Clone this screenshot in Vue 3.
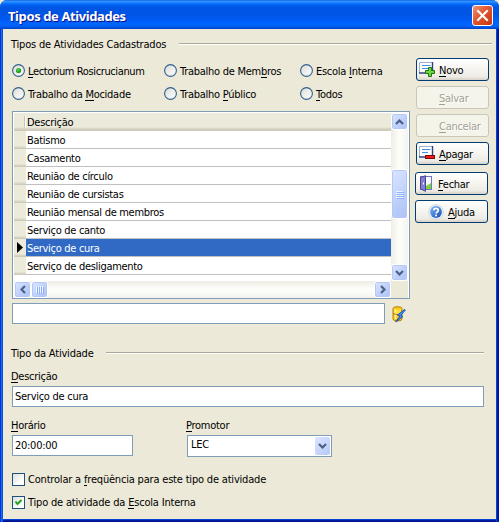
<script setup>
import { ref } from 'vue'

const sources = [
  ['', 'L', 'ectorium Rosicrucianum'],
  ['Trabalho de Mem', 'b', 'ros'],
  ['Escola ', 'I', 'nterna'],
  ['Trabalho da ', 'M', 'ocidade'],
  ['Trabalho ', 'P', 'úblico'],
  ['', 'T', 'odos'],
]
const source = ref(0)

const rows = [
  'Batismo',
  'Casamento',
  'Reunião de círculo',
  'Reunião de cursistas',
  'Reunião mensal de membros',
  'Serviço de canto',
  'Serviço de cura',
  'Serviço de desligamento',
]
const current = ref(6)
const track = ref(false)
const internal = ref(true)
</script>

<template>
  <div class="window">
    <header class="titlebar">
      <h1>Tipos de Atividades</h1>
      <button class="close" aria-label="Fechar janela">
        <svg width="19" height="19" viewBox="0 0 19 19"><path d="M5 5l9 9M14 5l-9 9" stroke="#fff" stroke-width="2.1" stroke-linecap="square" /></svg>
      </button>
    </header>

    <main class="body">
      <div class="group first"><span>Tipos de Atividades Cadastrados</span><i></i></div>

      <div class="upper">
        <div class="left">
          <div class="radios">
            <div v-for="(s, i) in sources" :key="i" class="radio" @click="source = i">
              <svg width="13" height="13" viewBox="0 0 13 13">
                <defs>
                  <linearGradient id="rg" x1="0" y1="0" x2="1" y2="1"><stop offset="0" stop-color="#dcdcd7" /><stop offset="1" stop-color="#fff" /></linearGradient>
                  <radialGradient id="dot" cx=".4" cy=".35"><stop offset="0" stop-color="#5bdc58" /><stop offset="1" stop-color="#1c9b1a" /></radialGradient>
                </defs>
                <circle cx="6.5" cy="6.5" r="5.9" fill="url(#rg)" stroke="#2f5f8d" stroke-width="1.1" />
                <circle v-if="source === i" cx="6.5" cy="6.5" r="2.6" fill="url(#dot)" />
              </svg>
              <span>{{ s[0] }}<u>{{ s[1] }}</u>{{ s[2] }}</span>
            </div>
          </div>

          <div class="grid">
            <div class="grid-main">
              <div class="table">
                <div class="thead"><i></i><span>Descrição</span></div>
                <div v-for="(r, i) in rows" :key="r" class="row" :class="{ selected: i === current }" @click="current = i">
                  <div class="marker">
                    <svg v-if="i === current" width="6" height="11" viewBox="0 0 6 11"><path d="M0 0L6 5.5L0 11z" /></svg>
                  </div>
                  <div class="cell">{{ r }}</div>
                </div>
              </div>
              <div class="vscroll">
                <div class="sb"><svg width="9" height="6" viewBox="0 0 9 6"><path d="M1 5l3.500-3.500L8 5" /></svg></div>
                <div class="sb thumb"><svg width="8" height="9" viewBox="0 0 8 9" shape-rendering="crispEdges"><path class="grip" d="M0 1.500h7M0 3.500h7M0 5.500h7M0 7.500h7" /></svg></div>
                <div class="sb down"><svg width="9" height="6" viewBox="0 0 9 6"><path d="M1 1l3.500 3.500L8 1" /></svg></div>
              </div>
            </div>
            <div class="hscroll">
              <div class="sb"><svg width="6" height="9" viewBox="0 0 6 9"><path d="M5 1L1.500 4.500L5 8" /></svg></div>
              <div class="sb"><svg width="9" height="8" viewBox="0 0 9 8" shape-rendering="crispEdges"><path class="grip" d="M1.500 0v7M3.500 0v7M5.500 0v7M7.500 0v7" /></svg></div>
              <div class="sb right"><svg width="6" height="9" viewBox="0 0 6 9"><path d="M1 1l3.500 3.500L1 8" /></svg></div>
              <div class="corner"></div>
            </div>
          </div>

          <div class="search">
            <div class="field"></div>
            <svg width="14" height="17" viewBox="0 0 14 17">
              <path d="M1 2.500Q1 .7 5.500 .7T10 2.500V13Q10 15 5.500 15T1 13z" fill="#f8c818" stroke="#b57d06" />
              <path d="M2 2.500Q5.500 4.300 9 2.500V7Q5.500 9 2 7z" fill="#ffdf3c" />
              <path d="M3.500 3.500V13" stroke="#fff4a0" stroke-width="1.600" />
              <path d="M1 7.500Q5.500 10 10 7.500" fill="none" stroke="#b57d06" />
              <path d="M12.500 3.500L5.500 9l2.500 .8L3.700 16L10.800 10.500L8.800 9.500L13.400 4z" fill="#3c9cf6" stroke="#1246b4" stroke-width=".9" />
            </svg>
          </div>
        </div>

        <div class="buttons">
          <button class="btn">
            <svg class="ic" width="17" height="17" viewBox="0 0 17 17">
              <rect x="1" y="1" width="13" height="11" fill="#fff" /><path d="M.5 12V1.500H13" fill="none" stroke="#a3add0" /><path d="M0 12h13.500V1" fill="none" stroke="#34427c" stroke-width="1.400" />
              <path d="M3 4.500h8.500M3 7.500h6" stroke="#3e91ea" stroke-width="1.200" />
              <path d="M9.500 6.500h3v3h3v3h-3v3h-3v-3h-3v-3h3z" fill="#6ed63b" stroke="#1a7412" />
            </svg>
            <span><u>N</u>ovo</span>
          </button>
          <button class="btn disabled"><i class="ic"></i><span><u>S</u>alvar</span></button>
          <button class="btn disabled"><i class="ic"></i><span><u>C</u>ancelar</span></button>
          <button class="btn">
            <svg class="ic" width="17" height="17" viewBox="0 0 17 17">
              <rect x="1" y="1" width="13" height="11" fill="#fff" /><path d="M.5 12V1.500H13" fill="none" stroke="#a3add0" /><path d="M0 12h13.500V1" fill="none" stroke="#34427c" stroke-width="1.400" />
              <path d="M3 4.500h8.500M3 7.500h6" stroke="#3e91ea" stroke-width="1.200" />
              <rect x="6.500" y="10.500" width="9" height="3" fill="#f01818" stroke="#780c0c" />
            </svg>
            <span><u>A</u>pagar</span>
          </button>
          <button class="btn fechar">
            <svg class="ic" width="17" height="17" viewBox="0 0 17 17">
              <rect x="2.500" y="1.500" width="11" height="13" fill="#f7fbff" stroke="#7672bc" />
              <path d="M8 11l5-3v6H8z" fill="#79d33c" />
              <path d="M2.500 2.500L7.500 .7V16.300L2.500 14z" fill="#827ed4" stroke="#4b4594" />
              <path d="M5.500 7.500v2" stroke="#fff" />
            </svg>
            <span><u>F</u>echar</span>
          </button>
          <button class="btn ajuda">
            <svg class="ic" width="16" height="16" viewBox="0 0 16 16">
              <defs><linearGradient id="help" x1="0" y1="0" x2="1" y2="1"><stop offset="0" stop-color="#7db8f5" /><stop offset="1" stop-color="#124bb2" /></linearGradient></defs>
              <circle cx="8" cy="8" r="7.300" fill="#f1f5fb" stroke="#ccd5e4" /><circle cx="8" cy="8" r="5.900" fill="url(#help)" />
              <path d="M5.800 6.300Q6 4.300 8.100 4.300T10.300 6.200Q10.300 7.300 9.200 7.900T8.100 9.600" fill="none" stroke="#fff" stroke-width="1.700" /><rect x="7.200" y="10.600" width="1.800" height="1.700" fill="#fff" />
            </svg>
            <span><u>A</u>juda</span>
          </button>
        </div>
      </div>

      <div class="group second"><span>Tipo da Atividade</span><i></i></div>

      <label class="label"><u>D</u>escrição</label>
      <div class="field wide">Serviço de cura</div>

      <div class="pair">
        <div class="col">
          <label class="label"><u>H</u>orário</label>
          <div class="field time">20:00:00</div>
        </div>
        <div class="col">
          <label class="label"><u>P</u>romotor</label>
          <div class="field combo">
            <span>LEC</span>
            <div class="drop"><svg width="9" height="6" viewBox="0 0 9 6"><path d="M1 1l3.500 3.500L8 1" /></svg></div>
          </div>
        </div>
      </div>

      <div class="check" @click="track = !track">
        <div class="box"><svg v-if="track" width="9" height="9" viewBox="0 0 9 9"><path d="M1.500 3.500L3.500 6L7.500 2" /></svg></div>
        <span>Controlar a <u>f</u>reqüência para este tipo de atividade</span>
      </div>
      <div class="check" @click="internal = !internal">
        <div class="box"><svg v-if="internal" width="9" height="9" viewBox="0 0 9 9"><path d="M1.500 3.500L3.500 6L7.500 2" /></svg></div>
        <span>Tipo de atividade da <u>E</u>scola Interna</span>
      </div>
    </main>
  </div>
</template>

<style>
body { background: #ece9d8; overflow: hidden; }
</style>

<style scoped>
* { box-sizing: border-box; }
.window {
  width: 499px;
  height: 522px;
  display: flex;
  flex-direction: column;
  background: linear-gradient(90deg, #0831d9 0 1px, #166aee 1px 2px, #0855dd 2px 3px, #0855dd 3px 496px, #0841d8 496px 497px, #001ea0 497px 498px, #00138c 498px);
  border-radius: 7px 7px 0 0;
  overflow: hidden;
  font: 11px/13px "DejaVu Sans Condensed", "DejaVu Sans", sans-serif;
  font-stretch: condensed;
  letter-spacing: -0.27px;
  color: #000;
}
u { text-decoration: none; box-shadow: inset 0 -1px currentColor; }
.titlebar {
  height: 29px;
  flex: none;
  display: flex;
  align-items: center;
  justify-content: space-between;
  padding: 2px 6px 0 8px;
  background: linear-gradient(#0058e6 0, #3a93ff 1px, #288eff 2px, #127dff 3px, #0369fc 4px, #0057e5 7px, #0054e3 14px, #005bf5 20px, #0066ff 24px, #0062f5 26px, #0042c8 29px);
}
h1 {
  margin: 0;
  font: bold 13px/18px "Noto Sans", sans-serif;
  letter-spacing: -0.4px;
  color: #fff;
  text-shadow: 1px 1px #0f1089;
}
.close {
  width: 21px;
  height: 21px;
  padding: 0;
  border: 1px solid #fff;
  border-radius: 3px;
  background: linear-gradient(135deg, #eb9478, #e2552f 45%, #c7350d);
}
.close svg { display: block; }
.body {
  flex: 1;
  margin: 0 3px 3px;
  padding: 8px 4px 0 9px;
  background: #ece9d8;
  box-shadow: 0 1px #0841d8, 0 2px #001ea0, 0 3px #00138c;
}
.group { display: flex; align-items: center; height: 13px; letter-spacing: -0.2px; }
.group span { white-space: nowrap; margin-left: -1px; padding-top: 2px; }
.group i { flex: 1; height: 2px; background: #aca899; border-bottom: 1px solid #fff; }
.first i { margin-left: 13px; }
.second { margin: 22px 8px 0 0; }
.second i { margin-left: 12px; }
.upper { display: flex; gap: 6px; height: 274px; }
.left { width: 398px; }
.radios {
  display: grid;
  grid-template-columns: 152px 136px auto;
  grid-auto-rows: 23px;
  padding-top: 9px;
  height: 61px;
}
.radio { display: flex; align-items: center; gap: 3px; white-space: nowrap; }
.radio:first-child { letter-spacing: -0.38px; }
.radio span { padding-top: 1px; }
.radio svg { flex: none; }
.grid { height: 188px; padding: 1px; border: 1px solid #7f9db9; background: #fff; }
.grid-main { display: flex; height: 168px; }
.table { flex: 1; background: #fff; }
.thead {
  height: 18px;
  display: flex;
  align-items: center;
  background: linear-gradient(#ebeadb 0 14px, #e2decd 15px, #d6d2c2 16px, #cbc7b8 18px);
}
.thead i { width: 2px; height: 12px; margin: -1px 1px 0 10px; border-left: 1px solid #c7c5b2; background: #fff; }
.row { display: flex; height: 18px; }
.marker {
  width: 12px;
  padding: 3px 0 0 3px;
  background: linear-gradient(#ebeadb 0 15px, #dcd8c7 16px, #cbc7b8 18px);
}
.marker svg { display: block; }
.cell { flex: 1; padding: 3px 0 0 1px; border-bottom: 1px solid #c0c0c0; letter-spacing: -0.3px; white-space: nowrap; }
.selected .cell { background: #316ac5; color: #fff; }
.vscroll { width: 17px; display: flex; flex-direction: column; background: linear-gradient(90deg, #eeede5, #fefefb 50%, #f4f3ee); }
.hscroll { display: flex; height: 17px; background: linear-gradient(#eeede5, #fefefb 50%, #f4f3ee); }
.sb {
  flex: none;
  width: 17px;
  height: 17px;
  display: grid;
  place-items: center;
  border: 1px solid #fff;
  border-radius: 3px;
  background: linear-gradient(135deg, #dbe5ff, #bccffb 60%, #adc2f5);
  box-shadow: inset 0 0 0 1px #b5c8f5;
}
.sb path, .drop path { fill: none; stroke: #4d6185; stroke-width: 2.2; }
.sb path.grip { stroke: #eef4fe; stroke-width: 1; filter: drop-shadow(1px 1px #8cb0f8); }
.thumb { height: 50px; margin-top: 39px; }
.down { margin-top: auto; }
.right { margin-left: auto; }
.corner { width: 17px; background: #ece9d8; }
.search { display: flex; gap: 7px; padding-top: 4px; }
.search .field { width: 373px; }
.search svg { margin-top: 3px; }
.field { height: 21px; border: 1px solid #7f9db9; background: #fff; padding: 3px 2px 0; white-space: nowrap; }
.buttons { padding-top: 8px; }
.btn {
  display: flex;
  align-items: center;
  width: 73px;
  height: 23px;
  margin: 0 0 5px;
  padding: 0 0 0 2px;
  border: 1px solid #003c74;
  border-radius: 3px;
  background: linear-gradient(#fff, #f5f4ef 50%, #ecebe5 85%, #d6d0c5);
  font: inherit;
  letter-spacing: inherit;
  color: #000;
}
.btn span { padding-top: 2px; }
.btn .ic { width: 17px; flex: none; margin-right: 3px; }
.disabled { border-color: #c9c7ba; background: #f5f4ea; color: #a1a192; text-shadow: 1px 1px #fff; }
.fechar { margin: 7px 0 5px -1px; }
.ajuda { margin-left: -1px; padding-left: 12px; }
.ajuda .ic { width: 16px; margin-right: 4px; }
.label { display: block; margin-left: -1px; padding-top: 1px; }
.second + .label { margin-top: 10px; }
.wide { width: 472px; margin-top: 3px; }
.pair { display: flex; gap: 54px; padding-top: 11px; }
.pair .field { margin-top: 3px; }
.time { width: 121px; }
.field.combo { width: 145px; height: 22px; padding: 1px; display: flex; justify-content: space-between; }
.combo span { padding: 1px 0 0 2px; }
.drop { width: 15px; height: 18px; display: grid; place-items: center; border-radius: 2px; background: linear-gradient(135deg, #dbe5ff, #b5c9f7); }
.check { display: flex; align-items: center; gap: 3px; height: 13px; margin-top: 16px; letter-spacing: -0.19px; white-space: nowrap; }
.check + .check { margin-top: 10px; }
.box { width: 13px; height: 13px; padding: 1px; border: 1px solid #1c5180; background: linear-gradient(135deg, #dcdcd7, #fff 70%); }
.box svg { display: block; }
.box path { fill: none; stroke: #21a121; stroke-width: 2; }
</style>
